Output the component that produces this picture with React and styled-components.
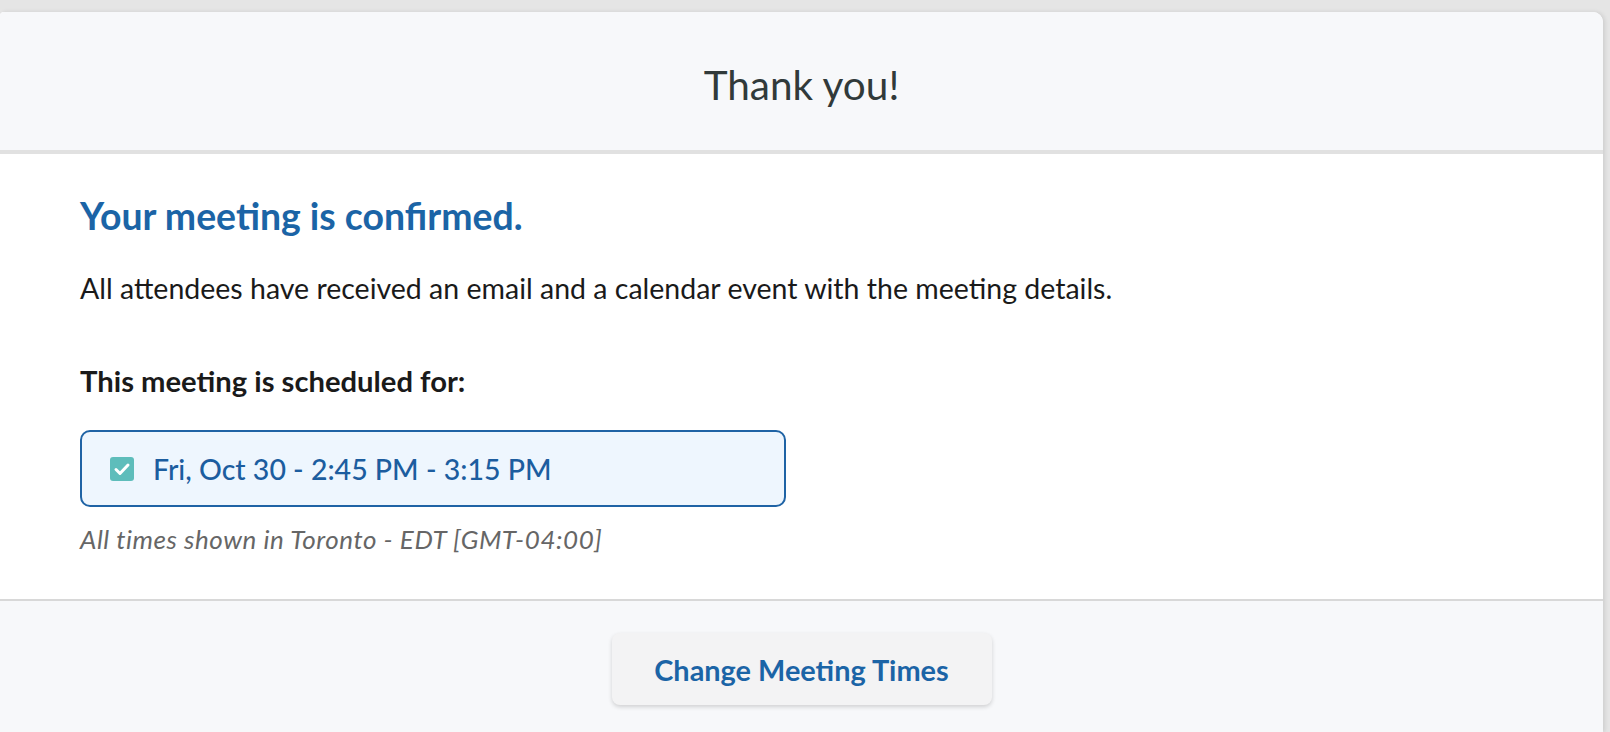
import React from "react";
import styled, { createGlobalStyle } from "styled-components";

const GlobalStyle = createGlobalStyle`
  html, body { margin: 0; padding: 0; }
  body {
    background: #e5e5e5;
    font-family: "Lato", "Open Sans", sans-serif;
    -webkit-font-smoothing: antialiased;
  }
`;

const Page = styled.div`
  padding: 12px 7px 0 0;
  height: 732px;
  box-sizing: border-box;
  overflow: hidden;
`;

const Card = styled.div`
  height: 100%;
  background: #ffffff;
  border-radius: 4px 10px 0 0;
  box-shadow: 2px 0 4px rgba(0, 0, 0, 0.1);
  display: flex;
  flex-direction: column;
  overflow: hidden;
`;

const Header = styled.header`
  height: 142px;
  flex: none;
  box-sizing: border-box;
  padding-top: 8px;
  background: #f7f8fa;
  border-bottom: 4px solid #e1e1e1;
  display: flex;
  align-items: center;
  justify-content: center;
`;

const Title = styled.h1`
  margin: 0;
  font-size: 40.5px;
  font-weight: 400;
  color: #313a3a;
  line-height: 48px;
`;

const Body = styled.main`
  height: 445px;
  flex: none;
  padding: 0 80px;
  box-sizing: border-box;
  overflow: hidden;
`;

const Heading = styled.h2`
  margin: 38px 0 0;
  font-size: 37.4px;
  line-height: 48px;
  font-weight: 700;
  color: #1b64a6;
`;

const Text = styled.p`
  margin: ${(p) => p.$top}px 0 0;
  font-size: ${(p) => (p.$bold ? 29.2 : 28.5)}px;
  line-height: 36px;
  font-weight: ${(p) => (p.$bold ? 700 : 400)};
  color: #1a1a1a;
`;

const Slot = styled.div`
  margin-top: 31px;
  width: 706px;
  height: 77px;
  box-sizing: border-box;
  border: 2px solid #1f63a5;
  border-radius: 10px;
  background: #eef6fe;
  display: flex;
  align-items: center;
  gap: 19px;
  padding-left: 28px;
`;

const SlotText = styled.span`
  font-size: 28.5px;
  line-height: 36px;
  font-weight: 500;
  color: #1c5d9f;
`;

const Note = styled.p`
  margin: 17px 0 0;
  font-size: 26px;
  line-height: 30px;
  letter-spacing: 0.55px;
  font-style: italic;
  color: #666666;
`;

const Footer = styled.footer`
  flex: 1;
  background: #f7f8fa;
  border-top: 2px solid #d8d8d8;
  display: flex;
  justify-content: center;
  padding-top: 32px;
`;

const Button = styled.button`
  width: 380px;
  height: 72px;
  border: none;
  border-radius: 8px;
  background: #f3f3f4;
  box-shadow: 0 2px 4px rgba(0, 0, 0, 0.16);
  font-family: inherit;
  font-size: 28.9px;
  font-weight: 700;
  color: #1b64a6;
  cursor: pointer;
`;

const CheckIcon = () => (
  <svg width="24" height="24" viewBox="0 0 24 24" aria-hidden="true">
    <rect x="0" y="0" width="24" height="24" rx="3" fill="#5ebdbb" />
    <path
      d="M6 12.5 L10 16.5 L18 8"
      fill="none"
      stroke="#ffffff"
      strokeWidth="3"
      strokeLinecap="round"
      strokeLinejoin="round"
    />
  </svg>
);

export default function App() {
  return (
    <>
      <GlobalStyle />
      <Page>
        <Card>
          <Header>
            <Title>Thank you!</Title>
          </Header>
          <Body>
            <Heading>Your meeting is confirmed.</Heading>
            <Text $top={30}>
              All attendees have received an email and a calendar event with the meeting details.
            </Text>
            <Text $top={57} $bold>
              This meeting is scheduled for:
            </Text>
            <Slot>
              <CheckIcon />
              <SlotText>Fri, Oct 30 - 2:45 PM - 3:15 PM</SlotText>
            </Slot>
            <Note>All times shown in Toronto - EDT [GMT-04:00]</Note>
          </Body>
          <Footer>
            <Button>Change Meeting Times</Button>
          </Footer>
        </Card>
      </Page>
    </>
  );
}
